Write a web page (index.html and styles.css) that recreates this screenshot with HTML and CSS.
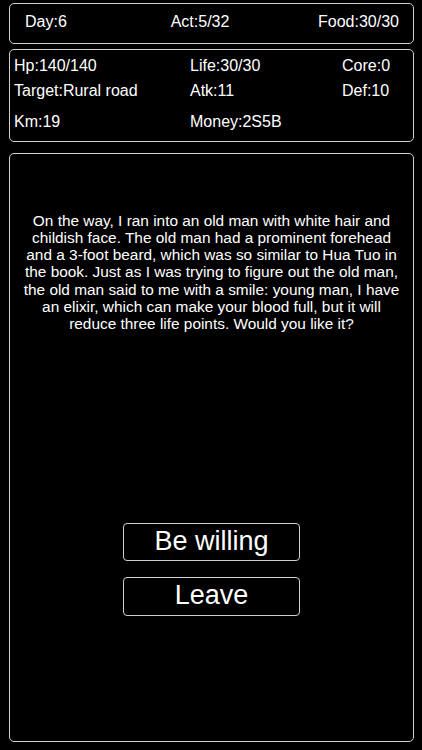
FILE: index.html
```html
<!DOCTYPE html>
<html lang="en">
<head>
<meta charset="utf-8">
<title>Journey</title>
<link rel="stylesheet" href="styles.css">
</head>
<body>
<main class="page">
  <section class="panel top-bar">
    <span class="stat">Day:6</span>
    <span class="stat">Act:5/32</span>
    <span class="stat">Food:30/30</span>
  </section>
  <section class="panel status">
    <span class="stat">Hp:140/140</span>
    <span class="stat">Life:30/30</span>
    <span class="stat">Core:0</span>
    <span class="stat">Target:Rural road</span>
    <span class="stat">Atk:11</span>
    <span class="stat">Def:10</span>
    <span class="stat">Km:19</span>
    <span class="stat">Money:2S5B</span>
    <span class="stat"></span>
  </section>
  <section class="panel event">
    <p class="story">On the way, I ran into an old man with white hair and childish face. The old man had a prominent forehead and a 3-foot beard, which was so similar to Hua Tuo in the book. Just as I was trying to figure out the old man, the old man said to me with a smile: young man, I have an elixir, which can make your blood full, but it will reduce three life points. Would you like it?</p>
    <div class="choices">
      <button class="choice">Be willing</button>
      <button class="choice">Leave</button>
    </div>
  </section>
</main>
</body>
</html>
```

FILE: styles.css
```css
html, body {
  margin: 0;
  padding: 0;
  background: #000;
}

body {
  width: 422px;
  height: 750px;
  color: #fff;
  font-family: "Liberation Sans", Arial, sans-serif;
  overflow: hidden;
}

.page {
  display: flex;
  flex-direction: column;
  padding: 3px 8px 0 9px;
}

.panel {
  box-sizing: border-box;
  border: 1px solid #cfcfcf;
  border-radius: 5px;
}

.stat {
  font-size: 16px;
  line-height: 18.4px;
  white-space: nowrap;
}

.top-bar {
  height: 41px;
  display: grid;
  grid-template-columns: 145.7px 1fr auto;
  align-items: center;
  padding: 0 14px 3px 15px;
}

.status {
  margin-top: 5px;
  height: 93px;
  display: grid;
  grid-template-columns: 176px 152px 1fr;
  grid-template-rows: 25.7px 31px 18.4px;
  padding: 6.5px 4px 9.4px 4px;
}

.event {
  margin-top: 11px;
  height: 589px;
  display: flex;
  flex-direction: column;
  align-items: center;
  padding-top: 57.5px;
}

.story {
  margin: 0;
  width: 383px;
  font-size: 15.4px;
  line-height: 17.3px;
  text-align: center;
}

.choices {
  margin-top: 190.4px;
  display: flex;
  flex-direction: column;
  gap: 16px;
}

.choice {
  box-sizing: border-box;
  width: 177.3px;
  height: 38.3px;
  padding: 0 0 2px;
  background: #000;
  color: #fff;
  border: 1px solid #cfcfcf;
  border-radius: 4px;
  font-family: "Liberation Sans", Arial, sans-serif;
  font-size: 27px;
  line-height: 1;
}
```
